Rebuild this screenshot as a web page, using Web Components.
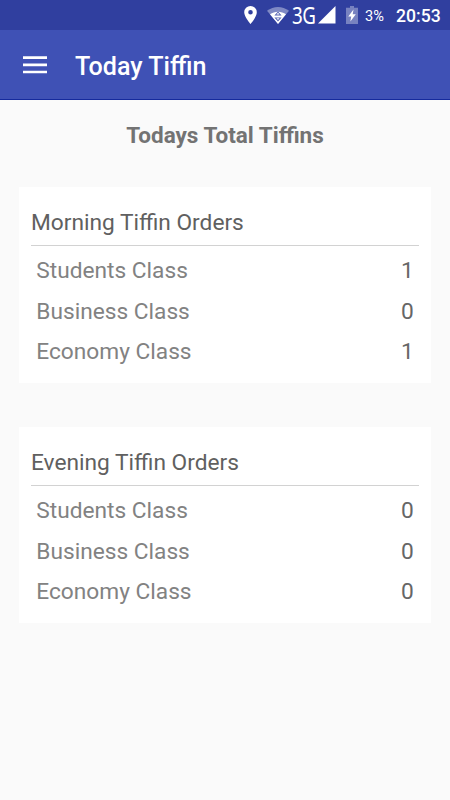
<!DOCTYPE html>
<html lang="en">
<head>
<meta charset="utf-8">
<title>Today Tiffin</title>
<style>
body{margin:0;background:#fafafa;font-family:Roboto,"Liberation Sans",sans-serif;width:450px;height:800px;overflow:hidden}
</style>
</head>
<body>
<tiffin-app></tiffin-app>
<script>
const define=(name,html)=>{
  const t=document.createElement('template');
  t.innerHTML=html;
  customElements.define(name,class extends HTMLElement{
    constructor(){super();this.attachShadow({mode:'open'}).append(t.content.cloneNode(true));}
  });
};

define('status-bar',`
<style>
:host{display:flex;height:30px;background:#303f9f;color:#fff;align-items:center;justify-content:flex-end;padding-right:11px;box-sizing:border-box}
svg{display:block;flex:none}
.pin{margin-right:10px}
.wifi{margin-right:3px}
.net{width:24px;height:30px;font:23.5px/30px "Noto Sans",sans-serif;margin-right:2px}
.net span{display:inline-block;transform:scaleX(.8);transform-origin:0 0;letter-spacing:-.6px}
.sig{margin-right:10px}
.bat{margin-right:7px}
.pct{font-size:14.6px;line-height:30px;width:31px;padding-top:1px}
.time{font-size:17.6px;font-weight:500;line-height:30px;width:43px;padding-top:2px;white-space:nowrap}
</style>
<svg class="pin" width="13" height="18" viewBox="0 0 13 18"><path fill="#fff" fill-rule="evenodd" d="M6.5 0A6.3 6.3 0 0 0 .2 6.3C.2 11 6.5 18 6.5 18s6.3-7 6.3-11.7A6.3 6.3 0 0 0 6.5 0Zm0 4a2.3 2.3 0 1 1 0 4.6 2.3 2.3 0 0 1 0-4.6Z"/></svg>
<svg class="wifi" width="22" height="18" viewBox="0 0 22 18"><path fill="#7f89c4" d="M0 4.8C6.6-.3 15.4-.3 22 4.8L11 18Z"/><path fill="#fff" d="M3 8.3C7.5 4.8 14.5 4.8 19 8.3L11 18Z"/><path fill="#5563b3" d="M7.4 9.4 11 5.4l3.6 4ZM7.4 11.4 11 15.4l3.6-4Z"/><path fill="#fff" d="M9.4 8.6 11 6.8l1.6 1.8ZM9.4 12.2 11 14l1.6-1.8Z"/></svg>
<div class="net"><span>3G</span></div>
<svg class="sig" width="18" height="18" viewBox="0 0 18 18"><path fill="#fff" d="M17.5 0v17.5H0Z"/></svg>
<svg class="bat" width="12" height="18" viewBox="0 0 12 18"><path fill="#7882c0" d="M4 0h4v1.8h4V18H0V1.8h4Z"/><path fill="#fff" d="M7.5 3.5 2.3 10.5h2.9L4.4 15.5 9.8 8.3H6.7Z"/></svg>
<div class="pct">3%</div><div class="time">20:53</div>`);

define('app-bar',`
<style>
:host{display:flex;height:70px;box-sizing:border-box;background:#3f51b5;border-bottom:1px solid #152a9d;align-items:center;padding-left:23px;color:#fff}
svg{display:block;margin-right:28px;flex:none}
h1{margin:0;font-size:25.1px;font-weight:500;line-height:30px;padding-top:5px;white-space:nowrap}
</style>
<svg width="24" height="18" viewBox="0 0 24 18"><path fill="#fff" d="M0 .3h24v2.6H0ZM0 7.5h24v2.7H0ZM0 14.7h24v2.6H0Z"/></svg>
<h1><slot></slot></h1>`);

define('page-heading',`
<style>
:host{display:block;height:87px;box-sizing:border-box;padding-top:21px;text-align:center;font-size:22.5px;line-height:28px;font-weight:700;color:#737373}
</style><slot></slot>`);

define('order-card',`
<style>
:host{display:block;box-sizing:border-box;width:412px;height:196px;margin:0 0 44px 19px;background:#fff;padding:21px 12px 0}
.title{height:38px;box-sizing:border-box;border-bottom:1px solid #d2d2d2;font-size:22.7px;line-height:29px;color:#606060}
.rows{padding:5px 5.3px 0}
</style>
<div class="title"><slot name="title"></slot></div>
<div class="rows"><slot></slot></div>`);

define('order-row',`
<style>
:host{display:flex;justify-content:space-between;height:40.6px;line-height:40px;font-size:22.7px;color:#828282}
.n{color:#666}
</style>
<span><slot></slot></span><span class="n"><slot name="count"></slot></span>`);

define('tiffin-app',`
<style>:host{display:block;height:800px;background:#fafafa}</style>
<status-bar></status-bar>
<app-bar>Today Tiffin</app-bar>
<page-heading>Todays Total Tiffins</page-heading>
<order-card><span slot="title">Morning Tiffin Orders</span>
<order-row>Students Class<span slot="count">1</span></order-row>
<order-row>Business Class<span slot="count">0</span></order-row>
<order-row>Economy Class<span slot="count">1</span></order-row></order-card>
<order-card><span slot="title">Evening Tiffin Orders</span>
<order-row>Students Class<span slot="count">0</span></order-row>
<order-row>Business Class<span slot="count">0</span></order-row>
<order-row>Economy Class<span slot="count">0</span></order-row></order-card>`);
</script>
</body>
</html>
